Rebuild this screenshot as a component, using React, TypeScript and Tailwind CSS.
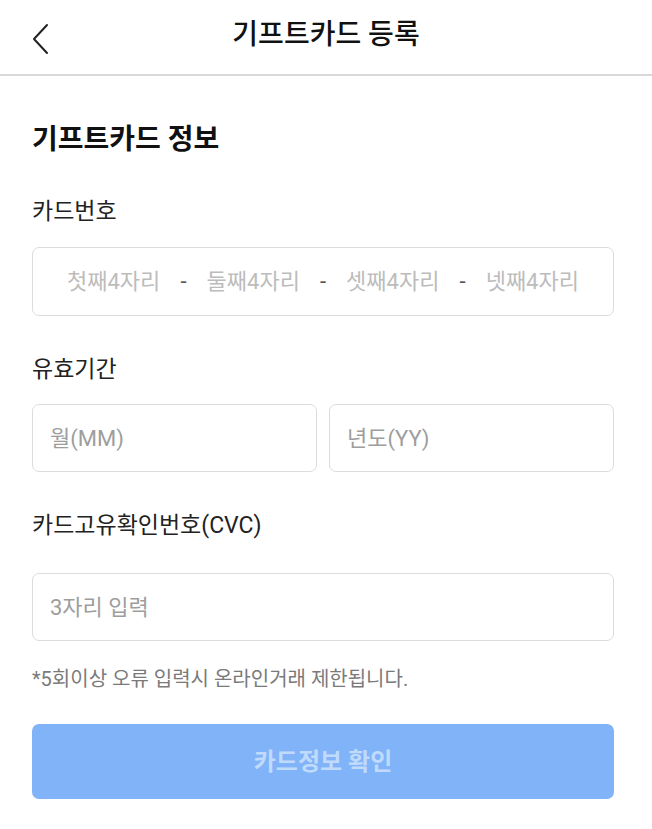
import React from "react";

const font = { fontFamily: 'Roboto, "Noto Sans CJK KR", "Noto Sans", sans-serif' };

const Label: React.FC<{ children: React.ReactNode; className?: string }> = ({ children, className }) => (
  <p className={`text-[23px] leading-[30px] text-[#222] ${className ?? ""}`}>{children}</p>
);

const TextBox: React.FC<{ placeholder: string; className?: string }> = ({ placeholder, className }) => (
  <input
    type="text"
    placeholder={placeholder}
    className={`h-[68px] rounded-[7px] border border-[#dcdcdc] bg-white px-[17px] text-[22px] text-[#222] outline-none placeholder:text-[#9d9d9d] ${className ?? ""}`}
  />
);

export default function App() {
  const segments = ["첫째4자리", "둘째4자리", "셋째4자리", "넷째4자리"];
  return (
    <div className="min-h-[829px] w-full bg-white" style={font}>
      {/* Header */}
      <div className="relative flex h-[76px] items-center justify-center border-b-2 border-[#d9d9d9]">
        <button className="absolute left-[26px] top-[18px] p-1" aria-label="back">
          <svg width="24" height="34" viewBox="0 0 24 34" fill="none">
            <path d="M17 3 L4 17 L17 31" stroke="#222" strokeWidth="2" strokeLinecap="round" strokeLinejoin="round" />
          </svg>
        </button>
        <h1 className="text-[28px] font-medium leading-[36px] text-[#111] -mt-[4px]">기프트카드 등록</h1>
      </div>

      {/* Form */}
      <div className="flex flex-col pl-8 pr-[38px]">
        <h2 className="mt-[46px] text-[28px] font-bold leading-[36px] text-[#111]">기프트카드 정보</h2>

        <Label className="mt-[39px]">카드번호</Label>
        <div className="mt-[20px] flex h-[69px] items-center justify-between rounded-[7px] border border-[#dcdcdc] px-[34px] text-[22px] text-[#bcbcbc]">
          {segments.map((s, i) => (
            <React.Fragment key={s}>
              {i > 0 && <span className="text-[#555]">-</span>}
              <span>{s}</span>
            </React.Fragment>
          ))}
        </div>

        <Label className="mt-[39px]">유효기간</Label>
        <div className="mt-[19px] flex gap-3">
          <TextBox placeholder="월(MM)" className="min-w-0 flex-1" />
          <TextBox placeholder="년도(YY)" className="min-w-0 flex-1" />
        </div>

        <Label className="mt-[39px]">카드고유확인번호(CVC)</Label>
        <TextBox placeholder="3자리 입력" className="mt-[32px] w-full" />

        <p className="mt-[25px] text-[20px] leading-[26px] text-[#7a7a7a]">*5회이상 오류 입력시 온라인거래 제한됩니다.</p>

        <button className="mt-[32px] h-[75px] w-full rounded-[7px] bg-[#80b3f8] text-[24px] font-bold text-[#c0dafc]">
          카드정보 확인
        </button>
      </div>
    </div>
  );
}
